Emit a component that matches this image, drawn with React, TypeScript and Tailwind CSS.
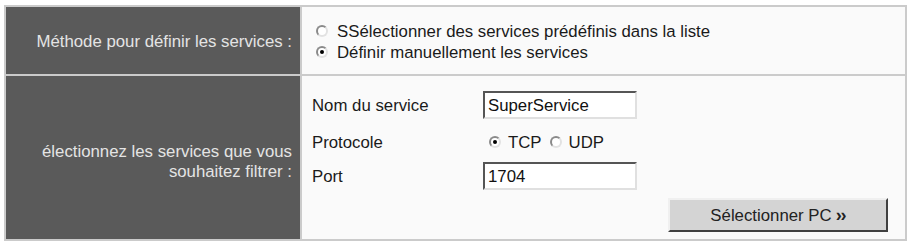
import React from "react";

function Radio({ checked }: { checked?: boolean }) {
  return (
    <span className="relative inline-block w-[12px] h-[12px] rounded-full border-2 border-t-[#8a8a8a] border-l-[#8a8a8a] border-r-[#e2e2e2] border-b-[#e2e2e2] bg-white shrink-0">
      {checked && (
        <span className="absolute left-[2px] top-[2px] w-[4px] h-[4px] rounded-full bg-black" />
      )}
    </span>
  );
}

function Field({ value }: { value: string }) {
  return (
    <div className="w-[154px] h-[28px] bg-white border-2 border-t-[#555555] border-l-[#555555] border-r-[#e0e0e0] border-b-[#e0e0e0] flex items-center pl-[3px] text-[#111]">
      {value}
    </div>
  );
}

export default function App() {
  return (
    <div className="w-[909px] h-[243px] bg-white pt-[5px] pl-[4px]" style={{ fontFamily: '"Liberation Sans", Arial, sans-serif' }}>
      <div className="w-[903px] border-2 border-[#cbcbcb] bg-[#cbcbcb] grid grid-cols-[294px_1fr] grid-rows-[67px_163px] gap-[2px] text-[16.8px] leading-[21px]">
        <div className="bg-[#5a5a5a] text-[#e4e4e4] flex items-center justify-end pr-[8px] pt-[2px]">
          Méthode pour définir les services :
        </div>
        <div className="bg-[#fafafa] text-[#1a1a1a] flex flex-col justify-center pl-[14px] pt-[2px]">
          <div className="flex items-center gap-[9px]">
            <Radio />
            <span>SSélectionner des services prédéfinis dans la liste</span>
          </div>
          <div className="flex items-center gap-[9px]">
            <Radio checked />
            <span>Définir manuellement les services</span>
          </div>
        </div>
        <div className="bg-[#5a5a5a] text-[#e4e4e4] flex flex-col items-end justify-center pr-[8px] pt-[9px] text-right leading-[20px]">
          <span>électionnez les services que vous</span>
          <span>souhaitez filtrer :</span>
        </div>
        <div className="bg-[#fafafa] text-[#1a1a1a] flex flex-col pt-[15px] pl-[10px] pr-[17px]">
          <div className="flex items-center h-[28px]">
            <span className="w-[171px]">Nom du service</span>
            <Field value="SuperService" />
          </div>
          <div className="flex items-center h-[43px] pt-[3px]">
            <span className="w-[171px]">Protocole</span>
            <div className="flex items-center pl-[6px]">
              <Radio checked />
              <span className="ml-[7px]">TCP</span>
              <span className="ml-[8px] flex"><Radio /></span>
              <span className="ml-[7px]">UDP</span>
            </div>
          </div>
          <div className="flex items-center h-[28px]">
            <span className="w-[171px]">Port</span>
            <Field value="1704" />
          </div>
          <div className="flex justify-end mt-[8px]">
            <button className="w-[220px] h-[34px] bg-[#d4d4d4] border-2 border-t-[#f0f0f0] border-l-[#f0f0f0] border-r-[#404040] border-b-[#404040] text-[#222] text-[16.8px] flex items-center justify-center">
              Sélectionner PC<span className="ml-[4px] font-bold text-[18px] leading-[18px] tracking-[-1px]">››</span>
            </button>
          </div>
        </div>
      </div>
    </div>
  );
}
